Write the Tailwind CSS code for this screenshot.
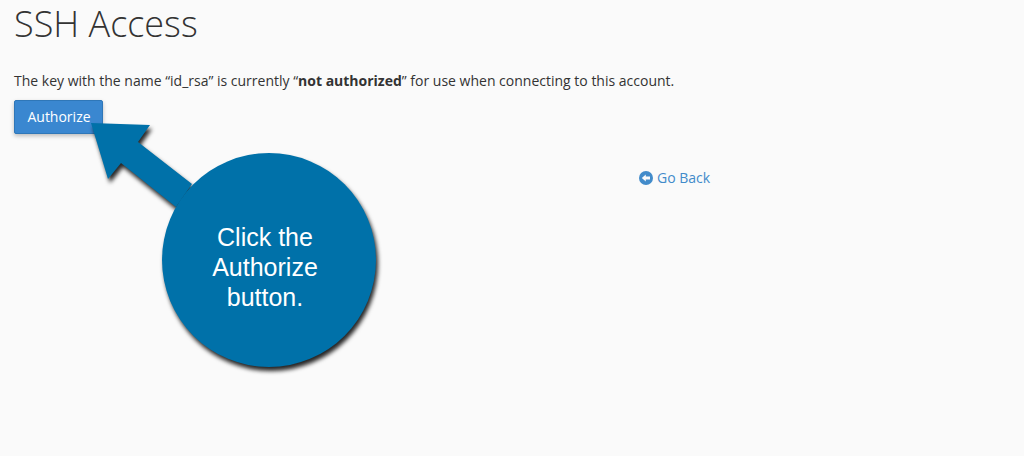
<!DOCTYPE html>
<html lang="en">
<head>
    <meta charset="UTF-8">
    <meta name="viewport" content="width=device-width, initial-scale=1.0">
    <title>SSH Access</title>
    <script src="https://cdn.jsdelivr.net/npm/@tailwindcss/browser@4"></script>
</head>
<body class="bg-[#fafafa] overflow-hidden">
    <div class="relative h-[456px] w-[1024px] px-[14px] font-['Open_Sans',sans-serif] text-[14px] text-[#333333]">
        <h1 class="h-[47px] text-[36px] leading-[47px] font-light text-[#333333]">SSH Access</h1>
        <p class="mt-[24px] h-[20px] leading-[20px]">The key with the name “id_rsa” is currently “<b class="font-bold">not authorized</b>” for use when connecting to this account.</p>
        <div class="mt-[9px]">
            <button class="h-[34px] w-[89px] rounded-[2px] border border-[#2f77b8] bg-[#3a87d0] pb-[2px] pl-[1px] text-center text-[14px] text-white shadow-[0_2px_4px_rgba(0,0,0,0.25)]">Authorize</button>
        </div>
        <div class="mt-[34px] flex items-center pl-[625px] leading-[20px] text-[#428bca]">
            <svg class="mr-[4px] h-[14px] w-[14px]" viewBox="0 0 14 14">
                <circle cx="7" cy="7" r="7" fill="#428bca"/>
                <path d="M2.8 7 L6.8 3.4 V5.6 H11 V8.4 H6.8 V10.6 Z" fill="#fafafa"/>
            </svg>
            <span>Go Back</span>
        </div>

        <!-- callout over the page -->
        <div class="absolute left-[85px] top-[115px] h-[265px] w-[300px]">
            <svg class="absolute inset-0 drop-shadow-[2px_4px_2px_rgba(0,0,0,0.85)]" width="300" height="265" viewBox="85 115 300 265">
                <path d="M91 123 L150 125 L138 142 L192 184 L176 207 L121 163 L108 179 Z" fill="#0071a9"/>
                <circle cx="269" cy="260" r="107" fill="#0071a9"/>
            </svg>
            <div class="absolute left-[73px] top-[107px] w-[214px] text-center font-['Liberation_Sans',sans-serif] text-[25px] leading-[30px] text-white">Click the<br>Authorize<br>button.</div>
        </div>
    </div>
</body>
</html>
